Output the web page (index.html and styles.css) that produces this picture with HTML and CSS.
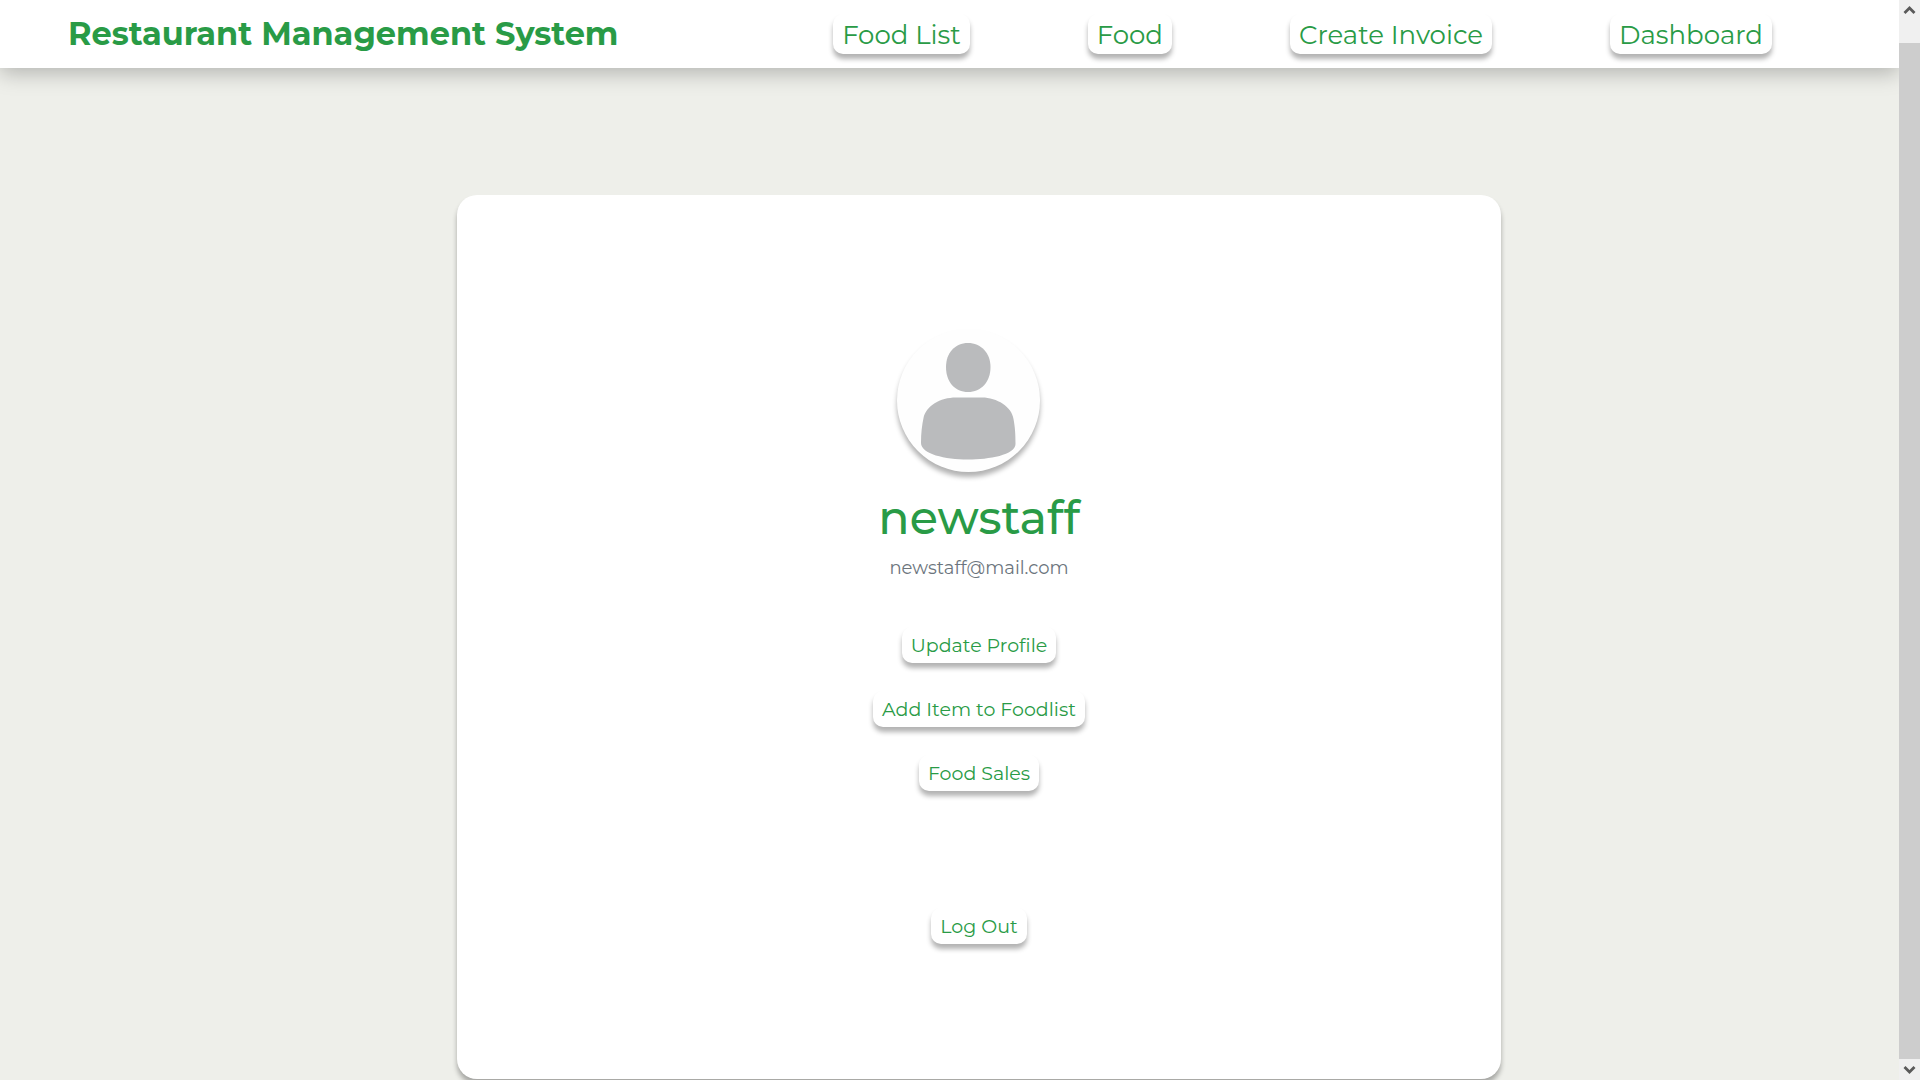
FILE: index.html
```html
<!DOCTYPE html>
<html lang="en">
<head>
<meta charset="utf-8">
<meta name="viewport" content="width=device-width, initial-scale=1">
<title>Restaurant Management System</title>
<link rel="stylesheet" href="styles.css">
</head>
<body>
<div class="viewport">
  <div class="page">
    <header class="topbar">
      <h1 class="brand">Restaurant Management System</h1>
      <nav class="menu">
        <a class="tab tab-large" href="#food-list">Food List</a>
        <a class="tab tab-large" href="#food">Food</a>
        <a class="tab tab-large" href="#invoice">Create Invoice</a>
        <a class="tab tab-large" href="#dashboard">Dashboard</a>
      </nav>
    </header>
    <main class="content">
      <section class="card">
        <svg class="avatar" viewBox="0 0 143 143" role="img" aria-label="Profile picture">
          <path fill="#babbbd" d="M71 14C84 14 93.500 24 93.500 38C93.500 53 84 63 71 63C58 63 49 53 49 38C49 24 58 14 71 14Z"/>
          <path fill="#babbbd" d="M59 68.500H85C100 68.500 115 78 116.500 90C118 98 118.500 105 118.500 115C118.500 126 92 130.500 71 130.500C48 130.500 24 125 24 114C24 104 25 96 26.500 89C29 77 43 68.500 59 68.500Z"/>
        </svg>
        <h2 class="name">newstaff</h2>
        <p class="email">newstaff@mail.com</p>
        <div class="actions">
          <a class="tab" href="#update">Update Profile</a>
          <a class="tab" href="#add">Add Item to Foodlist</a>
          <a class="tab" href="#sales">Food Sales</a>
        </div>
        <button class="tab" type="button">Log Out</button>
      </section>
    </main>
  </div>
  <div class="scrollbar" aria-hidden="true">
    <svg class="arrow" viewBox="0 0 21 21"><path d="M5.500 13L10.500 8L15.500 13" fill="none" stroke="#5a5a5a" stroke-width="2.800"/></svg>
    <div class="thumb"></div>
    <svg class="arrow" viewBox="0 0 21 21"><path d="M5.500 8L10.500 13L15.500 8" fill="none" stroke="#5a5a5a" stroke-width="2.800"/></svg>
  </div>
</div>
</body>
</html>
```
FILE: styles.css
```css
* {
  box-sizing: border-box;
}

body {
  margin: 0;
  background: #eeefea;
  color: #299b46;
  font-family: Montserrat, Inter, "Open Sans", sans-serif;
}

.viewport {
  display: flex;
  height: 100vh;
  overflow: hidden;
}

.page {
  flex: 1;
  overflow: hidden;
}

.topbar {
  display: flex;
  align-items: center;
  justify-content: space-between;
  height: 68px;
  padding: 0 127px 0 68px;
  background: #fff;
  box-shadow: 0 5px 20px rgba(0, 0, 0, 0.25);
}

.brand {
  margin: 0;
  font-size: 32px;
  font-weight: 700;
  line-height: 40px;
  white-space: nowrap;
}

.menu {
  display: flex;
  gap: 118px;
}

.tab {
  padding: 5px 9px 3px;
  border: 0;
  border-radius: 10px;
  background: #fff;
  box-shadow: 0 5px 5px rgba(0, 0, 0, 0.3);
  color: #299b46;
  font: inherit;
  font-size: 19px;
  font-weight: 400;
  line-height: 28px;
  text-decoration: none;
  white-space: nowrap;
}

.tab-large {
  font-size: 26px;
  line-height: 32px;
}

.content {
  padding: 127px 0 20px 457px;
}

.card {
  display: flex;
  flex-direction: column;
  align-items: center;
  width: calc(100% - 398px);
  padding: 134px 0 135px;
  border-radius: 20px;
  background: #fff;
  box-shadow: 0 5px 5px rgba(0, 0, 0, 0.3);
}

.avatar {
  width: 143px;
  height: 143px;
  margin-right: 22px;
  border-radius: 50%;
  background: #fefefe;
  box-shadow: 0 5px 5px rgba(0, 0, 0, 0.3);
}

.name {
  margin: 16px 0 0;
  font-size: 46px;
  font-weight: 500;
  line-height: 60px;
}

.email {
  margin: 6px 0 0;
  color: #6c757d;
  font-size: 18px;
  font-weight: 400;
  line-height: 28px;
}

.actions {
  display: flex;
  flex-direction: column;
  align-items: center;
  gap: 28px;
  margin: 45px 0 117px;
}

.scrollbar {
  display: flex;
  flex-direction: column;
  width: 21px;
  background: #f0f0f0;
}

.arrow {
  width: 21px;
  height: 21px;
}

.thumb {
  flex: 1;
  margin-top: 22px;
  background: #cdcdcd;
}
```
